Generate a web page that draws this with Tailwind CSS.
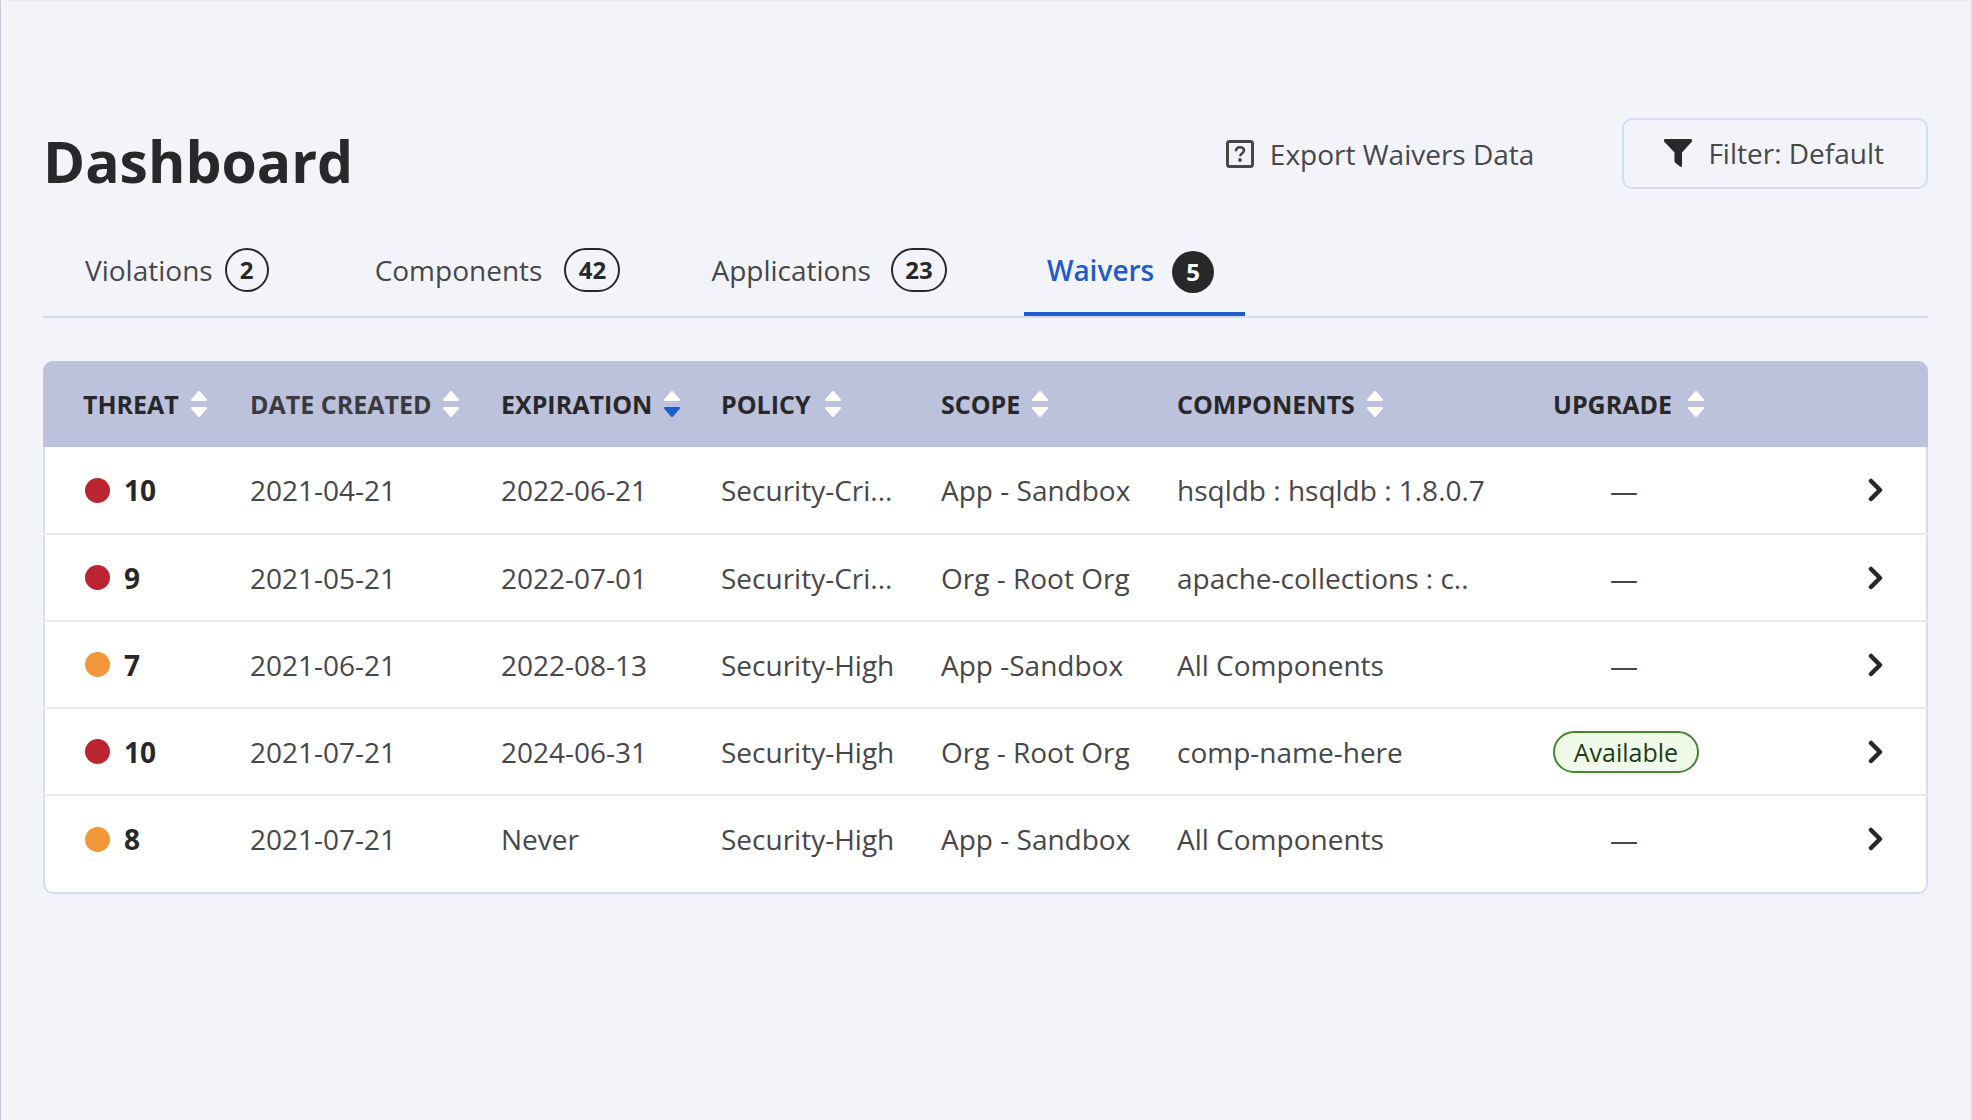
<!DOCTYPE html>
<html lang="en">
<head>
    <meta charset="UTF-8">
    <meta name="viewport" content="width=device-width, initial-scale=1.0">
    <title>Dashboard</title>
    <script src="https://cdn.jsdelivr.net/npm/@tailwindcss/browser@4"></script>
</head>
<body class="min-h-screen bg-[#f3f4f9] border-t border-t-[#ececec] border-l border-l-[#c9c9d6] border-r-2 border-r-[#e8e8e8] px-[42px] pt-[117px] font-['Open_Sans',sans-serif] text-[28px] leading-[38px] text-[#47474a]">

    <!-- shared icons -->
    <svg class="hidden">
        <symbol id="sort" viewBox="0 0 16 26">
            <path d="M8 1 15 9H1Z M8 25 15 17H1Z" stroke-width="2" stroke-linejoin="round" fill="#fff" stroke="#fff"/>
        </symbol>
        <symbol id="sort-desc" viewBox="0 0 16 26">
            <path d="M8 1 15 9H1Z" stroke-width="2" stroke-linejoin="round" fill="#fff" stroke="#fff"/>
            <path d="M8 25 15 17H1Z" stroke-width="2" stroke-linejoin="round" fill="#1f5ccb" stroke="#1f5ccb"/>
        </symbol>
        <symbol id="chevron" viewBox="0 0 16 24">
            <path d="M3 3 12 12 3 21" fill="none" stroke="#28282a" stroke-width="4.500" stroke-linecap="round" stroke-linejoin="round"/>
        </symbol>
    </svg>

    <header class="flex items-start justify-between">
        <h1 class="pt-2 text-[57px] leading-[70px] font-bold text-[#28282a]">Dashboard</h1>
        <div class="flex items-center">
            <button type="button" class="mr-22 flex items-center gap-4">
                <svg class="size-7" viewBox="0 0 28 28" fill="none" stroke="#47474a">
                    <rect x="1.500" y="1.500" width="25" height="25" rx="2" stroke-width="3"/>
                    <path d="M10 11.200C10 8.500 11.700 7.300 14 7.300S18 8.600 18 10.600C18 13.200 14.200 13.200 14.200 16.200" stroke-width="2.600"/>
                    <circle cx="14" cy="20" r="1.900" fill="#47474a" stroke="none"/>
                </svg>
                Export Waivers Data
            </button>
            <button type="button" class="flex h-[71px] items-center gap-4 rounded-[10px] border-2 border-[#d5dbf1] pr-[42px] pb-0.5 pl-10">
                <svg class="size-7" viewBox="0 0 28 28" fill="#28282a">
                    <path d="M1 0H27Q29 1 27.500 3L18 13.500V27Q17.500 28.500 16 27.500L11.500 24Q10.500 23 10.500 22V13.500L.5 3Q-1 1 1 0Z"/>
                </svg>
                Filter: Default
            </button>
        </div>
    </header>

    <nav class="mt-8 flex h-[90px] border-b-2 border-[#d5dbf1]">
        <a href="#" class="ml-[42px] flex h-[84px] items-center gap-3">Violations
            <span class="flex size-11 items-center justify-center rounded-full border-2 border-[#28282a] text-2xl font-bold text-[#28282a]">2</span></a>
        <a href="#" class="ml-[106px] flex h-[84px] items-center gap-[22px]">Components
            <span class="flex h-11 w-14 items-center justify-center rounded-full border-2 border-[#28282a] text-2xl font-bold text-[#28282a]">42</span></a>
        <a href="#" class="ml-[91px] flex h-[84px] items-center gap-5">Applications
            <span class="flex h-11 w-14 items-center justify-center rounded-full border-2 border-[#28282a] text-2xl font-bold text-[#28282a]">23</span></a>
        <a href="#" class="ml-[77px] flex h-[88px] items-center gap-[18px] border-b-4 border-[#1f5ccb] pr-[31px] pl-[23px] font-semibold text-[#1f5ccb]">Waivers
            <span class="mt-1 flex size-[42px] items-center justify-center rounded-full bg-[#28282a] text-2xl font-bold text-white">5</span></a>
    </nav>

    <div class="mt-[43px] overflow-hidden rounded-[10px] bg-white pb-3 inset-ring-2 inset-ring-[#d5dbf1]">
        <table class="w-full table-fixed border-collapse text-left">
            <colgroup>
                <col class="w-[207px]"><col class="w-[251px]"><col class="w-[220px]"><col class="w-[220px]">
                <col class="w-[236px]"><col class="w-[376px]"><col class="w-[146px]"><col>
            </colgroup>
            <thead class="bg-[#bcc1dc] text-[25px] text-[#28282a]">
                <tr class="h-[86px]">
                    <th class="pl-10"><button type="button" class="flex items-center gap-3">THREAT <svg class="h-[26px] w-4"><use href="#sort"/></svg></button></th>
                    <th class="text-[#3a3a3f]"><button type="button" class="flex items-center gap-3">DATE CREATED <svg class="h-[26px] w-4"><use href="#sort"/></svg></button></th>
                    <th><button type="button" class="flex items-center gap-3">EXPIRATION <svg class="h-[26px] w-4"><use href="#sort-desc"/></svg></button></th>
                    <th><button type="button" class="flex items-center gap-3.5">POLICY <svg class="h-[26px] w-4"><use href="#sort"/></svg></button></th>
                    <th><button type="button" class="flex items-center gap-3">SCOPE <svg class="h-[26px] w-4"><use href="#sort"/></svg></button></th>
                    <th><button type="button" class="flex items-center gap-3">COMPONENTS <svg class="h-[26px] w-4"><use href="#sort"/></svg></button></th>
                    <th><button type="button" class="flex items-center gap-4">UPGRADE <svg class="h-[26px] w-4"><use href="#sort"/></svg></button></th>
                    <th></th>
                </tr>
            </thead>
            <tbody class="divide-y-2 divide-[#e9e9eb]">
                <tr class="h-[87px]">
                    <td class="pl-[42px]"><span class="flex items-center gap-3.5 font-bold text-[#28282a]"><i class="size-[25px] rounded-full bg-[#bc252f]"></i>10</span></td>
                    <td>2021-04-21</td><td>2022-06-21</td><td>Security-Cri...</td><td>App - Sandbox</td><td>hsqldb : hsqldb : 1.8.0.7</td>
                    <td class="pr-1 text-center">—</td>
                    <td class="pr-11"><button type="button" aria-label="Open waiver" class="ml-auto block"><svg class="h-6 w-4"><use href="#chevron"/></svg></button></td>
                </tr>
                <tr class="h-[87px]">
                    <td class="pl-[42px]"><span class="flex items-center gap-3.5 font-bold text-[#28282a]"><i class="size-[25px] rounded-full bg-[#bc252f]"></i>9</span></td>
                    <td>2021-05-21</td><td>2022-07-01</td><td>Security-Cri...</td><td>Org - Root Org</td><td>apache-collections : c..</td>
                    <td class="pr-1 text-center">—</td>
                    <td class="pr-11"><button type="button" aria-label="Open waiver" class="ml-auto block"><svg class="h-6 w-4"><use href="#chevron"/></svg></button></td>
                </tr>
                <tr class="h-[87px]">
                    <td class="pl-[42px]"><span class="flex items-center gap-3.5 font-bold text-[#28282a]"><i class="size-[25px] rounded-full bg-[#f2973a]"></i>7</span></td>
                    <td>2021-06-21</td><td>2022-08-13</td><td>Security-High</td><td>App -Sandbox</td><td>All Components</td>
                    <td class="pr-1 text-center">—</td>
                    <td class="pr-11"><button type="button" aria-label="Open waiver" class="ml-auto block"><svg class="h-6 w-4"><use href="#chevron"/></svg></button></td>
                </tr>
                <tr class="h-[87px]">
                    <td class="pl-[42px]"><span class="flex items-center gap-3.5 font-bold text-[#28282a]"><i class="size-[25px] rounded-full bg-[#bc252f]"></i>10</span></td>
                    <td>2021-07-21</td><td>2024-06-31</td><td>Security-High</td><td>Org - Root Org</td><td>comp-name-here</td>
                    <td><span class="flex h-[42px] items-center justify-center rounded-full border-2 border-[#478632] bg-[#effae8] text-[25px] text-[#213d18]">Available</span></td>
                    <td class="pr-11"><button type="button" aria-label="Open waiver" class="ml-auto block"><svg class="h-6 w-4"><use href="#chevron"/></svg></button></td>
                </tr>
                <tr class="h-[87px]">
                    <td class="pl-[42px]"><span class="flex items-center gap-3.5 font-bold text-[#28282a]"><i class="size-[25px] rounded-full bg-[#f2973a]"></i>8</span></td>
                    <td>2021-07-21</td><td>Never</td><td>Security-High</td><td>App - Sandbox</td><td>All Components</td>
                    <td class="pr-1 text-center">—</td>
                    <td class="pr-11"><button type="button" aria-label="Open waiver" class="ml-auto block"><svg class="h-6 w-4"><use href="#chevron"/></svg></button></td>
                </tr>
            </tbody>
        </table>
    </div>

</body>
</html>
